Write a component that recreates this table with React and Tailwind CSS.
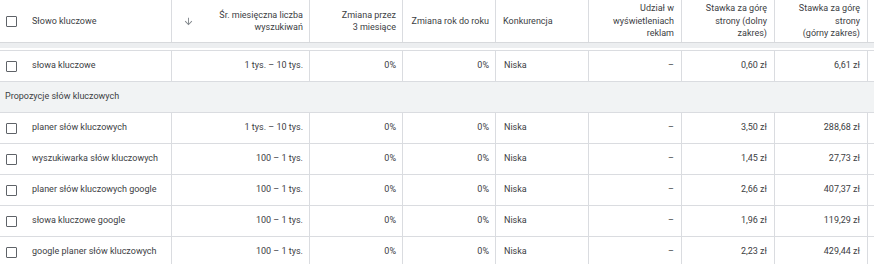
import React from 'react';

const rows = [
  { kw: 'planer słów kluczowych', vol: '1 tys. – 10 tys.', low: '3,50 zł', high: '288,68 zł' },
  { kw: 'wyszukiwarka słów kluczowych', vol: '100 – 1 tys.', low: '1,45 zł', high: '27,73 zł' },
  { kw: 'planer słów kluczowych google', vol: '100 – 1 tys.', low: '2,66 zł', high: '407,37 zł' },
  { kw: 'słowa kluczowe google', vol: '100 – 1 tys.', low: '1,96 zł', high: '119,29 zł' },
  { kw: 'google planer słów kluczowych', vol: '100 – 1 tys.', low: '2,23 zł', high: '429,44 zł' },
];

const grid = 'grid grid-cols-[172px_138px_93px_93px_93px_93px_93px_93px_93px]';

function Checkbox() {
  return <span className="block w-[11px] h-[11px] border-[1.5px] border-[#5f6368] rounded-[1px] bg-white" />;
}

function DataRow({ kw, vol, low, high }) {
  const cell = 'border-r border-[#dadce0] flex items-center';
  return (
    <div className={`${grid} h-[31px] border-t border-[#dadce0]`}>
      <div className={`${cell} pl-[6px]`}>
        <Checkbox />
        <span className="ml-[15px] whitespace-nowrap">{kw}</span>
      </div>
      <div className={`${cell} justify-end pr-[6px]`}>{vol}</div>
      <div className={`${cell} justify-end pr-[6px]`}>0%</div>
      <div className={`${cell} justify-end pr-[6px]`}>0%</div>
      <div className={`${cell} pl-[8px]`}>Niska</div>
      <div className={`${cell} justify-end pr-[7px]`}>–</div>
      <div className={`${cell} justify-end pr-[7px]`}>{low}</div>
      <div className={`${cell} justify-end pr-[7px]`}>{high}</div>
      <div className={cell}></div>
    </div>
  );
}

export default function App() {
  const head = 'border-r border-[#dadce0] flex items-center h-[42px] leading-[12.5px]';
  return (
    <div className="w-[874px] h-[264px] overflow-hidden bg-white text-[#3c4043] text-[9px] font-['Roboto',sans-serif]">
      {/* header */}
      <div className={grid}>
        <div className={`${head} pl-[6px]`}>
          <Checkbox />
          <span className="ml-[15px]">Słowo kluczowe</span>
        </div>
        <div className={`${head} pl-[11px] pr-[6px] justify-between`}>
          <svg width="11" height="11" viewBox="0 0 24 24" fill="#80868b">
            <path d="M20 12l-1.41-1.41L13 16.17V4h-2v12.17l-5.58-5.59L4 12l8 8 8-8z" />
          </svg>
          <span className="text-right">Śr. miesięczna liczba<br />wyszukiwań</span>
        </div>
        <div className={`${head} justify-end pr-[6px] text-right`}>Zmiana przez<br />3 miesiące</div>
        <div className={`${head} justify-end pr-[6px] text-right whitespace-nowrap`}>Zmiana rok do roku</div>
        <div className={`${head} pl-[7px]`}>Konkurencja</div>
        <div className={`${head} justify-end pr-[7px] text-right`}>Udział w<br />wyświetleniach<br />reklam</div>
        <div className={`${head} justify-end pr-[7px] text-right`}>Stawka za górę<br />strony (dolny<br />zakres)</div>
        <div className={`${head} justify-end pr-[7px] text-right`}>Stawka za górę<br />strony<br />(górny zakres)</div>
        <div className={head}></div>
      </div>
      <div className="h-[6px] bg-[#eceef0] border-t border-[#d7d9dc]" />
      <div className="h-[2px]" />

      <DataRow kw="słowa kluczowe" vol="1 tys. – 10 tys." low="0,60 zł" high="6,61 zł" />

      <div className="h-[31px] border-t border-[#dadce0] bg-[#f1f3f4] flex items-center pl-[5px]">
        Propozycje słów kluczowych
      </div>

      {rows.map((r) => (
        <DataRow key={r.kw} {...r} />
      ))}
    </div>
  );
}
